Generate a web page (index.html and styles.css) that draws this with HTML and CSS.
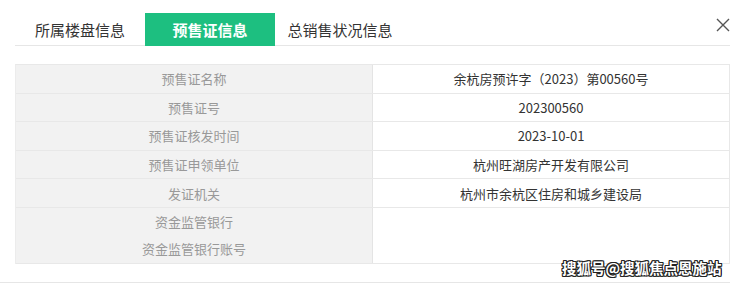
FILE: index.html
```html
<!DOCTYPE html>
<html lang="zh">
<head>
<meta charset="utf-8">
<link rel="stylesheet" href="styles.css">
</head>
<body>
<div class="panel">
  <div class="tabs">
    <div class="tab">所属楼盘信息</div>
    <div class="tab active">预售证信息</div>
    <div class="tab">总销售状况信息</div>
  </div>
  <svg class="close" width="14" height="14" viewBox="0 0 14 14"><path d="M1 1L13 13M13 1L1 13" stroke="#555" stroke-width="1.4" fill="none"/></svg>
  <div class="table">
    <div class="row"><div class="k">预售证名称</div><div class="v">余杭房预许字（2023）第00560号</div></div>
    <div class="row"><div class="k">预售证号</div><div class="v">202300560</div></div>
    <div class="row"><div class="k">预售证核发时间</div><div class="v">2023-10-01</div></div>
    <div class="row"><div class="k">预售证申领单位</div><div class="v">杭州旺湖房产开发有限公司</div></div>
    <div class="row"><div class="k">发证机关</div><div class="v">杭州市余杭区住房和城乡建设局</div></div>
    <div class="row tall"><div class="k"><span>资金监管银行</span><span>资金监管银行账号</span></div><div class="v"></div></div>
  </div>
  <div class="footer"></div>
  <div class="watermark">搜狐号@搜狐焦点恩施站</div>
</div>
</body>
</html>
```
FILE: styles.css
```css
* { box-sizing: border-box; }
html, body { margin: 0; padding: 0; background: #fff; }
body {
  font-family: "Noto Sans CJK SC", "Noto Sans", sans-serif;
  width: 740px;
  height: 283px;
  overflow: hidden;
}
.panel {
  position: relative;
  padding: 13px 10px 0 15px;
}
.tabs {
  display: flex;
  height: 33px;
  border-bottom: 1px solid #e6e6e6;
  width: 715px;
}
.tab {
  width: 130px;
  height: 33px;
  display: flex;
  align-items: center;
  justify-content: center;
  font-size: 15px;
  color: #333;
}
.tab.active {
  background: #1dbf80;
  color: #fff;
  font-weight: bold;
  margin-bottom: -1px;
  height: 33px;
}
.close {
  position: absolute;
  top: 18px;
  left: 716px;
}
.table {
  margin-top: 18px;
  width: 715px;
  border-top: 1px solid #e8e8e8;
  border-left: 1px solid #ececec;
}
.row {
  display: grid;
  grid-template-columns: 357px 357px;
  height: 28.6px;
  border-bottom: 1px solid #e8e8e8;
  font-size: 13px;
}
.row.tall { height: 56px; }
.k {
  background: #f2f2f2;
  color: #999;
  border-right: 1px solid #e4e4e4;
  display: flex;
  flex-direction: column;
  align-items: center;
  justify-content: center;
}
.row.tall .k { justify-content: space-around; padding: 0 0 1px; }
.v {
  color: #333;
  border-right: 1px solid #e8e8e8;
  display: flex;
  align-items: center;
  justify-content: center;
}
.footer {
  margin-top: 18px;
  margin-left: -15px;
  width: 730px;
  border-top: 1px solid #e6e6e6;
}
.watermark {
  position: absolute;
  left: 562px;
  top: 257px;
  font-size: 14.5px;
  font-weight: bold;
  color: #fff;
  text-shadow: -1px -1px 0 #222, 1px -1px 0 #222, -1px 1px 0 #222, 1px 1px 0 #222, 0 1px 0 #222, 0 -1px 0 #222, 1px 0 0 #222, -1px 0 0 #222;
}
```
